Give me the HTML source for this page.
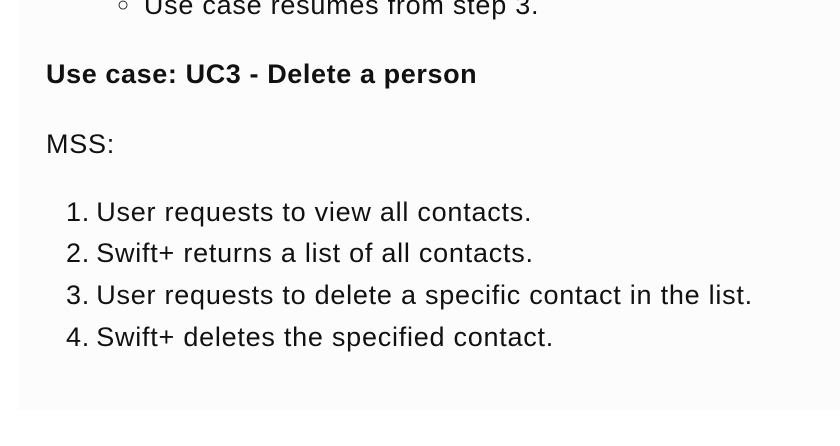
<!DOCTYPE html>
<html><head><style>
body{margin:0;width:840px;height:446px;background:#fff;overflow:hidden;font-family:"Liberation Sans",sans-serif;color:#111;}
.p{position:absolute;left:18px;top:0;width:822px;height:410px;background:#fcfcfc;}
.t{position:absolute;white-space:nowrap;font-size:27px;letter-spacing:0.75px;}
</style></head><body>
<div class="p"></div>
<div class="t" style="left:117px;top:-10px;"><span style="font-size:20px;position:relative;top:-3px;margin-right:14px">○</span>Use case resumes from step 3.</div>
<div class="t" style="left:46px;top:59px;font-weight:bold;letter-spacing:0.6px">Use case: UC3 - Delete a person</div>
<div class="t" style="left:46px;top:129px;">MSS:</div>
<div class="t" style="left:66px;top:197px;">1.<span style="margin-left:-2px"> </span>User requests to view all contacts.</div>
<div class="t" style="left:66px;top:238px;">2.<span style="margin-left:-2px"> </span>Swift+ returns a list of all contacts.</div>
<div class="t" style="left:66px;top:280px;">3.<span style="margin-left:-2px"> </span>User requests to delete a specific contact in the list.</div>
<div class="t" style="left:66px;top:322px;">4.<span style="margin-left:-2px"> </span>Swift+ deletes the specified contact.</div>
</body></html>
